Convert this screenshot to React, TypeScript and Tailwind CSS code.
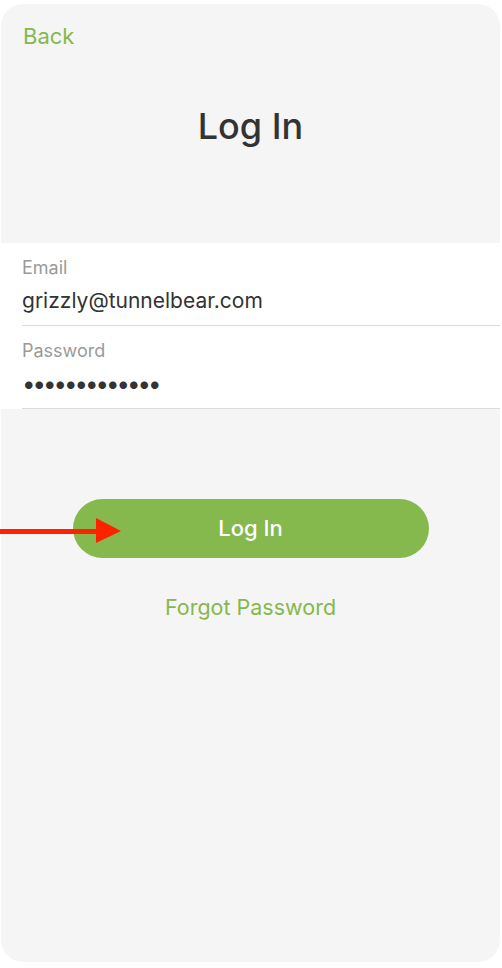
export default function App() {
  return (
    <div className="relative w-[502px] h-[968px] bg-white" style={{ fontFamily: "Inter, 'Noto Sans', sans-serif" }}>
      <div className="ml-[1px] pt-[4px]">
        <div className="w-[499px] h-[958px] rounded-[22px] bg-[#f5f5f5] overflow-hidden flex flex-col">
          <div className="pt-[18px] pl-[22px]">
            <span className="text-[22px] leading-[28px] text-[#85b84d]">Back</span>
          </div>
          <h1 className="mt-[54px] text-center text-[36px] leading-[44px] font-medium text-[#333333]">Log In</h1>

          <div className="mt-[95px] bg-white pl-[21px]">
            <div className="pt-[14px] pb-[10px] border-b border-[#dcdcdc]">
              <div className="text-[18px] leading-[22px] text-[#9a9a9a]">Email</div>
              <div className="mt-[8px] text-[21px] leading-[28px] text-[#333333]">grizzly@tunnelbear.com</div>
            </div>
            <div className="pt-[14px] pb-[10px] border-b border-[#dcdcdc]">
              <div className="text-[18px] leading-[22px] text-[#9a9a9a]">Password</div>
              <div className="mt-[8px] text-[24px] leading-[28px] text-[#333333] tracking-[-3px]">•••••••••••••</div>
            </div>
          </div>

          <div className="mt-[90px] flex justify-center">
            <button className="w-[356px] h-[59px] rounded-full bg-[#85b84d] text-white text-[22px] font-medium">Log In</button>
          </div>
          <div className="mt-[35px] text-center text-[21.5px] leading-[28px] text-[#85b84d]">Forgot Password</div>
        </div>
      </div>

      <svg className="absolute left-0 top-[518px]" width="122" height="26" viewBox="0 0 122 26">
        <rect x="0" y="11" width="100" height="5" fill="#ff2200" />
        <polygon points="96,0 121,13 96,25" fill="#ff2200" />
      </svg>
    </div>
  );
}
